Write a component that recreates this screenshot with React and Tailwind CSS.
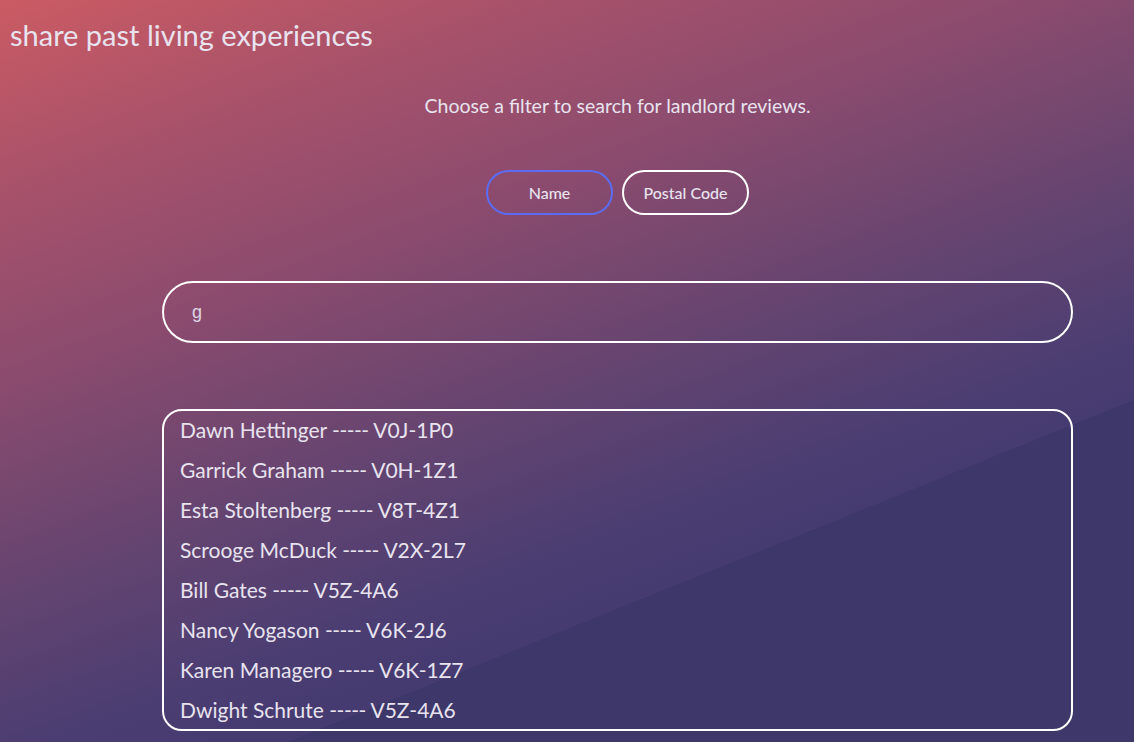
import React from "react";

const people = [
  ["Dawn Hettinger", "V0J-1P0"],
  ["Garrick Graham", "V0H-1Z1"],
  ["Esta Stoltenberg", "V8T-4Z1"],
  ["Scrooge McDuck", "V2X-2L7"],
  ["Bill Gates", "V5Z-4A6"],
  ["Nancy Yogason", "V6K-2J6"],
  ["Karen Managero", "V6K-1Z7"],
  ["Dwight Schrute", "V5Z-4A6"],
];

export default function App() {
  return (
    <div className="min-h-screen w-full overflow-hidden bg-[linear-gradient(158deg,transparent_71.5%,#3d3869_71.5%),linear-gradient(160deg,#cb5b63_0%,#a9526a_16%,#8b4b6e_33%,#634470_52%,#4a3d72_66%,#453b70_72%)] text-[#e8e3ef] font-['Lato','Open_Sans',sans-serif]">
      <header className="pl-[10px] pt-[17px]">
        <h1 className="text-[29px] leading-[36px] font-normal">share past living experiences</h1>
      </header>
      <main className="pl-[162px] pr-[61px] flex flex-col items-center">
        <p className="mt-[40px] text-[19.5px] leading-[26px]">Choose a filter to search for landlord reviews.</p>
        <div className="mt-[51px] flex gap-[9px]">
          <button className="w-[127px] h-[45px] rounded-full border-2 border-[#5c6cf2] text-[16px] font-medium text-[#e8e3ef]">
            Name
          </button>
          <button className="w-[127px] h-[45px] rounded-full border-2 border-white text-[16px] font-medium text-[#e8e3ef]">
            Postal Code
          </button>
        </div>
        <div className="mt-[66px] w-full h-[62px] rounded-full border-2 border-white flex items-center pl-[28px]">
          <input
            readOnly
            value="g"
            className="bg-transparent outline-none text-[18px] text-[#ddd5e5] font-['Liberation_Sans',Arial,sans-serif] w-full"
          />
        </div>
        <ul className="mt-[66px] w-full h-[322px] rounded-[20px] border-2 border-white px-[16px] overflow-hidden">
          {people.map(([name, code], i) => (
            <li key={i} className="h-[40px] leading-[38px] text-[21px] whitespace-nowrap">
              {name} <span className="tracking-[-0.5px]">-----</span> {code}
            </li>
          ))}
        </ul>
      </main>
    </div>
  );
}
